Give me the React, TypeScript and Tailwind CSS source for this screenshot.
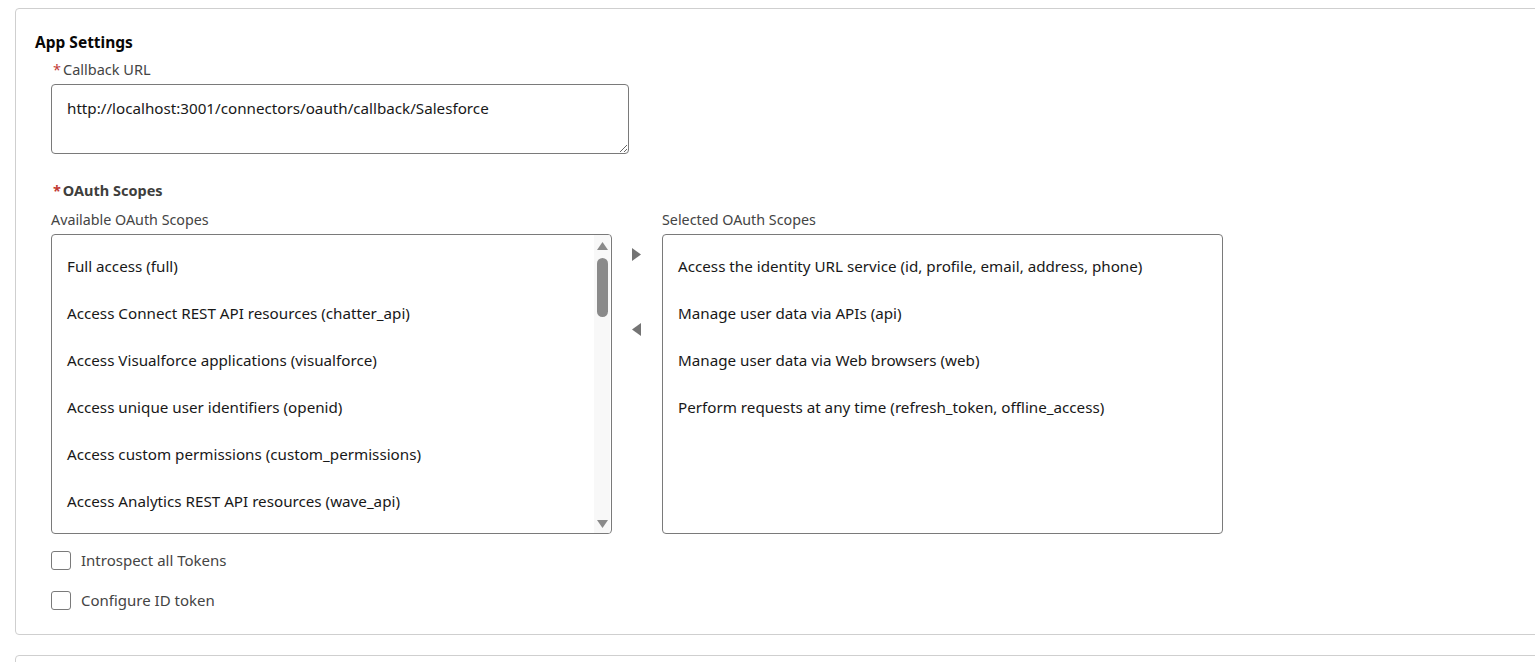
import React from 'react';

const available = [
  'Full access (full)',
  'Access Connect REST API resources (chatter_api)',
  'Access Visualforce applications (visualforce)',
  'Access unique user identifiers (openid)',
  'Access custom permissions (custom_permissions)',
  'Access Analytics REST API resources (wave_api)',
];

const selected = [
  'Access the identity URL service (id, profile, email, address, phone)',
  'Manage user data via APIs (api)',
  'Manage user data via Web browsers (web)',
  'Perform requests at any time (refresh_token, offline_access)',
];

const Star = () => <span className="text-[#c23934] mr-[2px]">*</span>;

const Triangle: React.FC<{ dir: 'up' | 'down' | 'left' | 'right'; className?: string }> = ({ dir, className }) => {
  const vertical = dir === 'up' || dir === 'down';
  const pts = {
    up: '0,8 5.5,0 11,8',
    down: '0,0 5.5,8 11,0',
    right: '0,0 9,6.5 0,13',
    left: '9,0 0,6.5 9,13',
  }[dir];
  return (
    <svg width={vertical ? 11 : 9} height={vertical ? 8 : 13} viewBox={vertical ? '0 0 11 8' : '0 0 9 13'} className={className}>
      <polygon points={pts} fill="currentColor" />
    </svg>
  );
};

const Checkbox: React.FC<{ label: string }> = ({ label }) => (
  <label className="flex items-center gap-[10px] h-[20px]">
    <span className="w-[20px] h-[19px] border border-[#7a7a7a] rounded-[3px] bg-white" />
    <span className="text-[15px] text-[#444]">{label}</span>
  </label>
);

export default function App() {
  return (
    <div className="w-[1535px] h-[662px] overflow-hidden bg-white text-[#181818]" style={{ fontFamily: '"Noto Sans", "Open Sans", sans-serif' }}>
      <div className="ml-[15px] mr-[-20px] mt-[8px] h-[627px] border border-[#cfcfcf] rounded-[4px] pt-[23px] pl-[19px]">
        <h2 className="text-[15.5px] font-bold leading-[20px] text-[#080707]">App Settings</h2>

        <div className="pl-[16px] mt-[9px]">
          <div className="text-[14.5px] leading-[16px] text-[#444] pl-[2px]">
            <Star />Callback URL
          </div>
          <textarea
            readOnly
            defaultValue="http://localhost:3001/connectors/oauth/callback/Salesforce"
            className="mt-[7px] block w-[578px] h-[70px] border border-[#7a7a7a] rounded-[4px] px-[15px] pt-[12px] text-[15.2px] leading-[22px] text-[#181818] outline-none"
            style={{ resize: 'vertical' }}
          />

          <div className="mt-[28px] text-[14.5px] leading-[16px] font-bold text-[#3e3e3c] pl-[2px]">
            <Star />OAuth Scopes
          </div>

          <div className="mt-[14px] flex">
            <div className="w-[561px]">
              <div className="text-[14.3px] leading-[16px] text-[#444]">Available OAuth Scopes</div>
              <div className="mt-[6px] h-[300px] border border-[#7a7a7a] rounded-[4px] flex overflow-hidden">
                <ul className="flex-1 pt-[19px] pl-[15px]">
                  {available.map((s) => (
                    <li key={s} className="h-[47px] leading-[24px] text-[15.2px]">{s}</li>
                  ))}
                </ul>
                <div className="w-[16px] mr-[1px] bg-[#f8f8f8] flex flex-col items-center pt-[7px] pb-[5px]">
                  <Triangle dir="up" className="text-[#8a8a8a]" />
                  <div className="mt-[8px] w-[11px] h-[59px] rounded-full bg-[#8a8a8a]" />
                  <div className="flex-1" />
                  <Triangle dir="down" className="text-[#8a8a8a]" />
                </div>
              </div>
            </div>

            <div className="w-[50px] flex flex-col items-center pt-[36px] text-[#747474]">
              <Triangle dir="right" className="ml-[-2px]" />
              <Triangle dir="left" className="mt-[62px] ml-[-2px]" />
            </div>

            <div className="w-[561px]">
              <div className="text-[14.3px] leading-[16px] text-[#444]">Selected OAuth Scopes</div>
              <div className="mt-[6px] h-[300px] border border-[#7a7a7a] rounded-[4px]">
                <ul className="pt-[19px] pl-[15px]">
                  {selected.map((s) => (
                    <li key={s} className="h-[47px] leading-[24px] text-[15.2px]">{s}</li>
                  ))}
                </ul>
              </div>
            </div>
          </div>

          <div className="mt-[16px] flex flex-col gap-[20px]">
            <Checkbox label="Introspect all Tokens" />
            <Checkbox label="Configure ID token" />
          </div>
        </div>
      </div>

      <div className="ml-[15px] mr-[-20px] mt-[20px] h-[40px] border border-[#cfcfcf] rounded-[4px]" />
    </div>
  );
}
